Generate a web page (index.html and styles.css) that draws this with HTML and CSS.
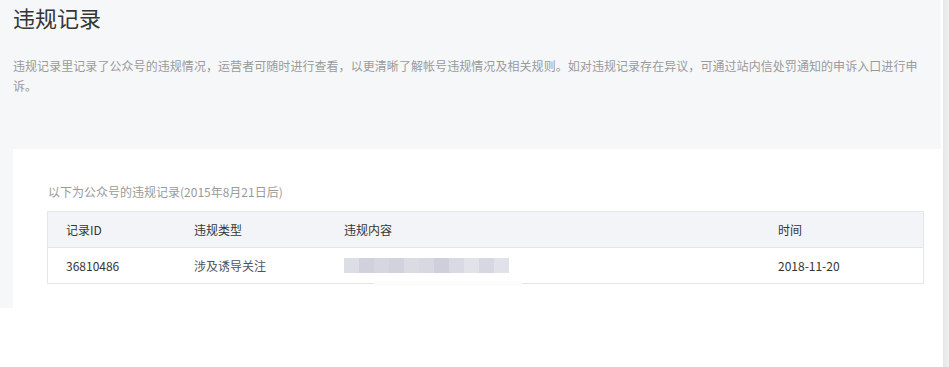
FILE: index.html
```html
<!DOCTYPE html>
<html lang="zh-CN">
<head>
	<meta charset="UTF-8">
	<meta name="viewport" content="width=device-width, initial-scale=1.0">
	<title>违规记录</title>
	<link rel="stylesheet" href="styles.css">
</head>
<body>

	<div class="page">
		<div class="header">
			<h2 class="title">违规记录</h2>
			<p class="desc">违规记录里记录了公众号的违规情况，运营者可随时进行查看，以更清晰了解帐号违规情况及相关规则。如对违规记录存在异议，可通过站内信处罚通知的申诉入口进行申诉。</p>
		</div>

		<div class="card">
			<p class="tips">以下为公众号的违规记录(2015年8月21日后)</p>
			<table class="record-table">
				<thead>
					<tr>
						<th class="col-id">记录ID</th>
						<th class="col-type">违规类型</th>
						<th class="col-content">违规内容</th>
						<th class="col-time">时间</th>
					</tr>
				</thead>
				<tbody>
					<tr>
						<td>36810486</td>
						<td class="type">涉及诱导关注</td>
						<td class="content-cell">
							<div class="mosaic">
								<span style="background:#dcdde5"></span>
								<span style="background:#cfd1dc"></span>
								<span style="background:#d4d6e0"></span>
								<span style="background:#d0d3de"></span>
								<span style="background:#dadce4"></span>
								<span style="background:#d7d9e2"></span>
								<span style="background:#cdd0db"></span>
								<span style="background:#d8dae3"></span>
								<span style="background:#e2e3e8"></span>
								<span style="background:#d6d7e0"></span>
								<span style="background:#e0e2ea"></span>
							</div>
							<div class="smudge"></div>
						</td>
						<td>2018-11-20</td>
					</tr>
				</tbody>
			</table>
		</div>
	</div>

	<div class="scroll-track"></div>

</body>
</html>
```

FILE: styles.css
```css
body {
	margin: 0;
	font-family: "Noto Sans CJK SC", "Liberation Sans", sans-serif;
	color: #353535;
	background: #fff;
	display: flex;
	align-items: flex-start;
}
.page {
	width: 941px;
	flex: none;
	background: #f6f7f9;
	padding-left: 13px;
	box-sizing: border-box;
}
.header {
	padding-bottom: 53px;
}
.title {
	margin: 0;
	padding-top: 2px;
	font-size: 22px;
	font-weight: normal;
	line-height: 30px;
	color: #353535;
}
.desc {
	margin: 24px 0 0;
	width: 910px;
	font-size: 12px;
	line-height: 20px;
	letter-spacing: 0.06px;
	color: #9a9a9a;
}
.card {
	background: #fff;
	padding: 33px 17px 24px 34px;
}
.tips {
	margin: 0 0 9px 1px;
	font-size: 12px;
	line-height: 20px;
	color: #9a9a9a;
}
.record-table {
	width: 100%;
	border-collapse: collapse;
	border: 1px solid #e4e6eb;
	font-size: 12px;
	table-layout: fixed;
}
.record-table th,
.record-table td {
	height: 35px;
	padding: 0 0 0 18px;
	text-align: left;
	font-weight: normal;
	line-height: 20px;
}
.record-table th {
	background: #f3f4f7;
	border-bottom: 1px solid #e4e6eb;
}
.col-id {
	width: 110px;
}
.col-type {
	width: 132px;
}
.col-content {
	width: 416px;
}
.type {
	color: #4e5261;
}
.content-cell {
	position: relative;
}
.mosaic {
	display: flex;
	height: 15px;
}
.mosaic span {
	width: 15px;
	height: 15px;
}
.smudge {
	position: absolute;
	left: 48px;
	bottom: -3px;
	width: 148px;
	height: 5px;
	background: #fcfcfc;
	border-radius: 3px;
}
.scroll-track {
	width: 6px;
	height: 367px;
	margin-left: 2px;
	background: linear-gradient(to right, #e6e6e6, #efefef);
}
```
